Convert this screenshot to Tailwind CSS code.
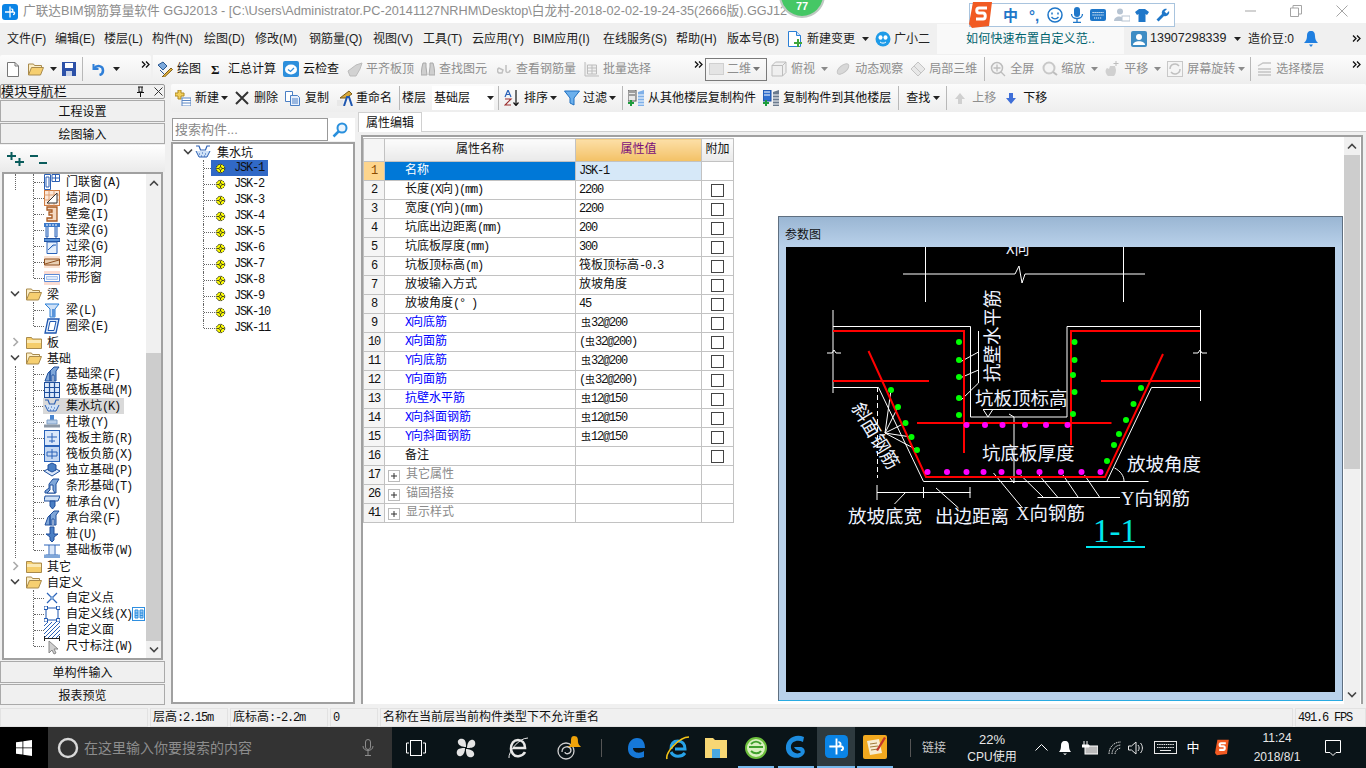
<!DOCTYPE html>
<html lang="zh-CN">
<head>
<meta charset="UTF-8">
<title>广联达BIM钢筋算量软件 GGJ2013</title>
<script src="https://cdn.jsdelivr.net/npm/@tailwindcss/browser@4"></script>
</head>
<body class="relative w-[1366px] h-[768px] overflow-hidden flex flex-col bg-[#f0f0f0] text-[12px] leading-none text-[#111] whitespace-nowrap font-['Liberation_Sans','Noto_Sans_CJK_SC',sans-serif]">

<!-- shared icons -->
<svg class="absolute w-0 h-0">
  <symbol id="caret" viewBox="0 0 7 4"><path d="M0 0h7L3.5 4z" fill="#222"/></symbol>
  <symbol id="more" viewBox="0 0 9 7"><path d="M1 .5l3 3-3 3M5 .5l3 3-3 3" fill="none" stroke="#111" stroke-width="1.3"/></symbol>
  <symbol id="gear" viewBox="0 0 11 11"><circle cx="5.5" cy="5.5" r="4.2" fill="#ffff00" stroke="#222" stroke-width="1" stroke-dasharray="1.6 .8"/><path d="M5.5 2v7M2 5.5h7" stroke="#222" stroke-width=".8"/><circle cx="5.5" cy="5.5" r="1.5" fill="#ffff00" stroke="#222" stroke-width=".7"/></symbol>
  <symbol id="folder" viewBox="0 0 16 14"><path d="M.5 2.5h5l1 1.5h9v9.5H.5z" fill="#f5cd6a" stroke="#a98a4c"/><path d="M1 5h14v3H1z" fill="#fbe9b4"/></symbol>
  <symbol id="folder-open" viewBox="0 0 16 14"><path d="M.5 13V2h5l1 1.500h7V6" fill="#fbeec7" stroke="#a98a4c"/><path d="M.5 13l3-7.500h12l-3 7.500z" fill="#f6cf70" stroke="#a98a4c"/></symbol>
  <symbol id="down" viewBox="0 0 10 8"><path d="M1 1.500l4 4 4-4" fill="none" stroke="#444" stroke-width="1.600"/></symbol>
  <symbol id="right" viewBox="0 0 8 10"><path d="M1.500 1l4 4-4 4" fill="none" stroke="#aaa" stroke-width="1.600"/></symbol>
  <symbol id="pit" viewBox="0 0 16 16"><path d="M1 2h3l1.500 4h5L12 2h3" fill="none" stroke="#2a5fb4" stroke-width="1.200"/><path d="M1 7l3 6h8l3-6" fill="#cfe1f7" stroke="#2a5fb4"/><path d="M4 10h1M7 9h1M10 10h1M6 12h1M9 12h1" stroke="#2a5fb4"/></symbol>
  <symbol id="beam3d" viewBox="0 0 16 16"><path d="M1 15l3-8 2-2v10zM6 5l4-4h5l-3 4v10H6z" fill="#7fa6d8" stroke="#1f4f9c"/><path d="M8 15V9h2v6" fill="#fff" stroke="#1f4f9c"/></symbol>
  <symbol id="rebar" viewBox="0 0 16 16"><rect x=".5" y=".5" width="15" height="15" fill="#dbe8fa" stroke="#2a62b8"/><path d="M3 7h10M8 3v10M5 11h6" stroke="#2a62b8" fill="none"/></symbol>
</svg>

<!-- title bar -->
<header class="h-[23px] shrink-0 bg-white flex items-center">
  <svg class="ml-[2px] w-4 h-4" viewBox="0 0 16 16"><rect width="16" height="16" rx="3" fill="#0a84e6"/><path d="M8 2.500v11M3 8h5.500c3 0 3-3 .8-3M8 8h3.500c1.500 0 1.500 2.500-.5 2.500" fill="none" stroke="#fff" stroke-width="1.300"/></svg>
  <span class="ml-[5px] text-[12.700px] text-[#8d8d8d]">广联达BIM钢筋算量软件 GGJ2013 - [C:\Users\Administrator.PC-20141127NRHM\Desktop\白龙村-2018-02-02-19-24-35(2666版).GGJ12</span>
</header>

<!-- floating score badge and input method bar -->
<div class="absolute left-[779px] top-[-28px] w-[46px] h-[46px] rounded-full bg-[#45c765] border-2 border-[#bfc9c2] z-10 flex items-end justify-center pb-[4px] text-white text-[11px] font-bold">77</div>
<div class="absolute left-[969px] top-[3px] w-[206px] h-[24px] bg-white border border-[#a9c4de] z-10 flex items-center text-[#1f77c9]">
  <svg class="absolute left-[-1px] top-[-3px] w-[25px] h-[28px]" viewBox="0 0 25 28"><path d="M4 1h19l-3 24-17 2-3-4z" fill="#f15a22"/><path d="M18 7h-8c-3 0-3 5 0 5h4c3 0 3 6 0 6H7" fill="none" stroke="#fff" stroke-width="3"/></svg>
  <span class="ml-[33px] w-[26px] text-[15px] font-bold">中</span>
  <span class="w-[18px] text-[15px] font-bold">°,</span>
  <svg class="w-[16px] h-[16px]" viewBox="0 0 16 16"><circle cx="8" cy="8" r="7" fill="none" stroke="#1f77c9" stroke-width="1.500"/><path d="M5 5.500v2M11 5.500v2" stroke="#1f77c9" stroke-width="1.500"/><path d="M4.500 10c2 2.500 5 2.500 7 0" fill="none" stroke="#1f77c9" stroke-width="1.300"/></svg>
  <svg class="ml-[7px] w-[14px] h-[16px]" viewBox="0 0 14 16"><rect x="4" y="0" width="6" height="10" rx="3" fill="#1f77c9"/><path d="M1.500 7c0 6 11 6 11 0M7 12v3M3 15.500h8" fill="none" stroke="#1f77c9" stroke-width="1.300"/></svg>
  <svg class="ml-[6px] w-[16px] h-[12px]" viewBox="0 0 16 12"><rect width="16" height="12" rx="2" fill="#1f77c9"/><path d="M2.500 3.500h11M2.500 6h11M4 9h8" stroke="#fff" stroke-dasharray="1.200 .8"/></svg>
  <svg class="ml-[8px] w-[16px] h-[14px]" viewBox="0 0 16 14"><circle cx="6" cy="3.500" r="3" fill="#b7c4d2"/><path d="M0 13c0-6 10-6 10 0z" fill="#b7c4d2"/><rect x="8" y="8" width="8" height="5" fill="#fff" stroke="#b7c4d2"/></svg>
  <svg class="ml-[5px] w-[14px] h-[13px]" viewBox="0 0 14 13"><path d="M4 0h6l4 3-2 3-1.500-1v8h-7V5L2 6 0 3z" fill="#1f77c9"/></svg>
  <svg class="ml-[7px] w-[14px] h-[14px]" viewBox="0 0 14 14"><path d="M13 3l-2.500 2.500-2-2L11 1C8 0 5 3 6 6L.5 11.500l2 2L8 8c3 1 6-2 5-5z" fill="#1f77c9"/></svg>
</div>
<div class="absolute left-[1245px] top-0 h-[21px] flex items-center text-[#a5a5a5]">
  <svg class="w-[18px] h-[12px]" viewBox="0 0 18 12"><path d="M0 6h11" stroke="#a5a5a5"/></svg>
  <svg class="ml-[27px] w-[12px] h-[12px]" viewBox="0 0 12 12"><path d="M.5 3h8v8.500h-8zM3 3V.5h8.500V9H8.500" fill="none" stroke="#a5a5a5"/></svg>
  <svg class="ml-[34px] w-[12px] h-[12px]" viewBox="0 0 12 12"><path d="M.5.500l11 11M11.500.500l-11 11" stroke="#a5a5a5"/></svg>
</div>

<!-- menu bar -->
<nav class="h-[31px] shrink-0 flex items-center pl-[7px] bg-[#f0f0f0] text-[#222]">
  <span class="w-[48px]">文件(F)</span><span class="w-[49px]">编辑(E)</span><span class="w-[48px]">楼层(L)</span><span class="w-[52px]">构件(N)</span><span class="w-[51px]">绘图(D)</span><span class="w-[54px]">修改(M)</span><span class="w-[64px]">钢筋量(Q)</span><span class="w-[50px]">视图(V)</span><span class="w-[49px]">工具(T)</span><span class="w-[61px]">云应用(Y)</span><span class="w-[70px]">BIM应用(I)</span><span class="w-[73px]">在线服务(S)</span><span class="w-[51px]">帮助(H)</span><span class="w-[61px]">版本号(B)</span>
  <span class="w-[19px]"><svg class="w-[14px] h-[16px]" viewBox="0 0 14 16"><path d="M.5.500h8l4 4v11H.5z" fill="#fff" stroke="#2a7fd6"/><path d="M8.500.500v4h4" fill="#cfe3f8" stroke="#2a7fd6"/><path d="M9 8v3H6v2h3v3h2v-3h3v-2h-3V8z" fill="#3fa63a"/></svg></span>
  <span class="w-[55px]">新建变更</span>
  <span class="w-[13px]"><svg class="w-[7px] h-[4px]"><use href="#caret"/></svg></span>
  <span class="w-[19px]"><svg class="w-[16px] h-[16px]" viewBox="0 0 16 16"><circle cx="8" cy="8" r="7.500" fill="#1e9be8"/><ellipse cx="5.500" cy="6.500" rx="2" ry="2.200" fill="#fff"/><ellipse cx="10.500" cy="6.500" rx="2" ry="2.200" fill="#fff"/><path d="M5 11c2 1.500 4 1.500 6 0" fill="none" stroke="#fff"/></svg></span>
  <span class="w-[43px]">广小二</span>
  <span class="w-[187px] h-full mt-[1px] bg-[#f9f9f9] pl-[29px] flex items-center text-[#00646e] tracking-[.2px]">如何快速布置自定义范..</span>
  <svg class="ml-[7px] w-4 h-4" viewBox="0 0 16 16"><rect width="16" height="16" rx="2" fill="#3d8cc4"/><circle cx="8" cy="6" r="3" fill="#fff"/><path d="M2 14c0-5 12-5 12 0z" fill="#fff"/></svg>
  <span class="ml-[3px] w-[84px] text-[12.500px]">13907298339</span>
  <span class="w-[14px]"><svg class="w-[7px] h-[4px]"><use href="#caret"/></svg></span>
  <span class="w-[56px]">造价豆:0</span>
  <svg class="w-[14px] h-[16px]" viewBox="0 0 14 16"><path d="M7 0c3 0 4 2 4 5 0 3 1 5 3 7H0c2-2 3-4 3-7 0-3 1-5 4-5z" fill="#1f7fe0"/><path d="M5 13.500h4L7 16z" fill="#1f7fe0"/></svg>
  <svg class="ml-[34px] w-[9px] h-[7px]"><use href="#more"/></svg>
</nav>

<!-- main toolbar -->
<div class="h-[30px] shrink-0 flex items-center bg-[#f0f0f0]">
  <div class="w-[151px] h-[29px] rounded-[2px] flex items-center pl-[7px] bg-gradient-to-b from-[#fcfcfc] to-[#eeeeee]">
    <svg class="w-[12px] h-[15px]" viewBox="0 0 12 15"><path d="M.5.500h7.500l3.500 3.500v10.500H.5z" fill="#fff" stroke="#777"/><path d="M8 .500V4h3.500" fill="none" stroke="#777"/></svg>
    <svg class="ml-[9px] w-[16px] h-[14px]"><use href="#folder-open"/></svg>
    <svg class="ml-[6px] w-[7px] h-[4px]"><use href="#caret"/></svg>
    <svg class="ml-[5px] w-[14px] h-[14px]" viewBox="0 0 14 14"><path d="M0 0h14v14H0z" fill="#2c51a8"/><path d="M3 1h8v5H3z" fill="#fff"/><path d="M4 9h6v5H4z" fill="#c9d3e8"/></svg>
    <i class="block ml-[6px] w-px h-[24px] bg-[#b8b8b8]"></i>
    <svg class="ml-[8px] w-[14px] h-[14px]" viewBox="0 0 14 14"><path d="M2.500 2v5h5" fill="none" stroke="#2f7fd8" stroke-width="2"/><path d="M3 6.500c3-4 9-3 9 2 0 2-1.500 4-3.500 4.500" fill="none" stroke="#2f7fd8" stroke-width="2.500"/></svg>
    <svg class="ml-[8px] w-[7px] h-[4px]"><use href="#caret"/></svg>
    <svg class="ml-[21px] -mt-[10px] w-[9px] h-[7px]"><use href="#more"/></svg>
  </div>
  <div class="ml-[2px] w-[1213px] h-[29px] flex items-center pl-[4px] bg-gradient-to-b from-[#fcfcfc] to-[#eeeeee]">
    <svg class="w-4 h-4" viewBox="0 0 16 16"><path d="M1 4l5-3 4 4-4 4z" fill="#7ca9dc" stroke="#29568f"/><path d="M6 15l8-8 1.500 1.500-8 7.500H5z" fill="#e3b23c" stroke="#7b5a15"/><path d="M3 9l4 4" stroke="#29568f"/></svg>
    <span class="ml-[4px]">绘图</span>
    <span class="ml-[10px] w-[7px] font-bold text-[13px] font-['Liberation_Serif']">Σ</span>
    <span class="ml-[10px]">汇总计算</span>
    <svg class="ml-[7px] w-4 h-4" viewBox="0 0 16 16"><rect width="16" height="16" rx="2" fill="#2d8fdc"/><ellipse cx="8" cy="8.500" rx="6" ry="5" fill="#fff"/><path d="M5 8.500l2.500 2L11 7" fill="none" stroke="#2d8fdc" stroke-width="1.300"/></svg>
    <span class="ml-[4px]">云检查</span>
    <svg class="ml-[8px] w-4 h-4" viewBox="0 0 16 16"><path d="M1 10l8-6 6-2-2 6-4 7H3z" fill="#d2d2d2" stroke="#bbb"/></svg>
    <span class="ml-[3px] text-[#8e8e8e]">平齐板顶</span>
    <svg class="ml-[7px] w-[14px] h-[14px]" viewBox="0 0 14 14"><path d="M2 1h3v4l1 8H0l1-8zM9 1h3l1 4 1 8H8l1-8z" fill="#cfcfcf" stroke="#aaa"/></svg>
    <span class="ml-[4px] text-[#8e8e8e]">查找图元</span>
    <svg class="ml-[10px] w-[14px] h-[14px]" viewBox="0 0 14 14"><path d="M2 6c-2 1-2 4 0 5h3l1-3zM9 3v6c0 2 4 2 4-1" fill="none" stroke="#c0c0c0" stroke-width="1.500"/></svg>
    <span class="ml-[5px] text-[#8e8e8e]">查看钢筋量</span>
    <svg class="ml-[8px] w-4 h-4" viewBox="0 0 16 16"><path d="M1 1v14h14M3.500 4h9v9h-9zM3.500 7h9M3.500 10h9M8 4v9" fill="#eee" stroke="#bdbdbd"/></svg>
    <span class="ml-[3px] text-[#8e8e8e]">批量选择</span>
    <svg class="ml-[43px] -mt-[10px] w-[9px] h-[7px]"><use href="#more"/></svg>
    <span class="ml-[2px] w-[62px] h-[23px] border border-[#7a7a7a] flex items-center pl-[3px] text-[#8e8e8e]">
      <i class="block w-[15px] h-[12px] bg-[#e4e4e4] border border-[#d0d0d0]"></i>
      <span class="ml-[3px] w-[26px]">二维</span>
      <svg class="w-[7px] h-[4px] opacity-60"><use href="#caret"/></svg>
    </span>
    <svg class="ml-[4px] w-4 h-4" viewBox="0 0 16 16"><path d="M1 4.500h10.500V15H1zM1 4.500L4.500 1H15v10.500L11.500 15M11.500 4.500L15 1" fill="#efefef" stroke="#bdbdbd"/></svg>
    <span class="ml-[4px] text-[#8e8e8e]">俯视</span>
    <svg class="ml-[6px] w-[7px] h-[4px] opacity-50"><use href="#caret"/></svg>
    <svg class="ml-[7px] w-4 h-4" viewBox="0 0 16 16"><ellipse cx="8" cy="8" rx="7" ry="3.500" transform="rotate(-40 8 8)" fill="#d8d8d8" stroke="#c4c4c4"/></svg>
    <span class="ml-[4px] text-[#8e8e8e]">动态观察</span>
    <svg class="ml-[7px] w-4 h-4" viewBox="0 0 16 16"><path d="M1 8l7-7 7 7-7 7z" fill="#e8e8e8" stroke="#c4c4c4"/><path d="M4 5l7 7M8 1l7 7" stroke="#c4c4c4"/></svg>
    <span class="ml-[3px] text-[#8e8e8e]">局部三维</span>
    <i class="block ml-[7px] w-px h-[24px] bg-[#b8b8b8]"></i>
    <svg class="ml-[5px] w-4 h-4" viewBox="0 0 16 16"><circle cx="7" cy="7" r="5.500" fill="#f4f4f4" stroke="#bdbdbd" stroke-width="1.500"/><path d="M7 3.500v7M3.500 7h7M11 11l4 4" stroke="#bdbdbd" stroke-width="1.300"/></svg>
    <span class="ml-[4px] text-[#8e8e8e]">全屏</span>
    <svg class="ml-[8px] w-4 h-4" viewBox="0 0 16 16"><circle cx="7" cy="7" r="5.500" fill="#f4f4f4" stroke="#c8c8c8" stroke-width="2"/><path d="M11 11l4 3" stroke="#bdbdbd" stroke-width="2"/></svg>
    <span class="ml-[3px] text-[#8e8e8e]">缩放</span>
    <svg class="ml-[6px] w-[7px] h-[4px] opacity-50"><use href="#caret"/></svg>
    <svg class="ml-[6px] w-4 h-4" viewBox="0 0 16 16"><path d="M4 15c-3-3-3-6-1-8l2 1 1-3h5l1 4c0 3-1 5-2 6z" fill="#d0d0d0"/><path d="M12 0v5M9.500 2.500h5" stroke="#bdbdbd"/></svg>
    <span class="ml-[4px] text-[#8e8e8e]">平移</span>
    <svg class="ml-[6px] w-[7px] h-[4px] opacity-50"><use href="#caret"/></svg>
    <svg class="ml-[6px] w-4 h-4" viewBox="0 0 16 16"><rect x=".5" y=".5" width="15" height="15" fill="#f5f5f5" stroke="#c8c8c8"/><path d="M3 8a5 5 0 0 1 9-3M13 8a5 5 0 0 1-9 3" fill="none" stroke="#c0c0c0" stroke-width="1.500"/></svg>
    <span class="ml-[4px] text-[#8e8e8e]">屏幕旋转</span>
    <svg class="ml-[3px] w-[7px] h-[4px] opacity-50"><use href="#caret"/></svg>
    <i class="block ml-[5px] w-px h-[24px] bg-[#b8b8b8]"></i>
    <svg class="ml-[6px] w-4 h-4" viewBox="0 0 16 16"><path d="M1 5l5-3h8M1 8h13M1 11h13M1 14h13" fill="none" stroke="#c4c4c4" stroke-width="1.300"/></svg>
    <span class="ml-[3px] text-[#8e8e8e]">选择楼层</span>
    <svg class="ml-[28px] -mt-[10px] w-[9px] h-[7px]"><use href="#more"/></svg>
  </div>
</div>

<div class="h-[620px] shrink-0 flex">
  <!-- left navigation -->
  <aside class="w-[165px] shrink-0 flex flex-col">
    <div class="h-[15px] shrink-0 border border-[#999] rounded-[2px] flex items-center text-[13px] tracking-[.2px] bg-[#f0f0f0]">
      <span class="w-[135px]">模块导航栏</span>
      <svg class="w-[9px] h-[11px]" viewBox="0 0 9 11"><path d="M2 1h5M3 1v5h3V1M1 6.500h7M4.500 7v4" stroke="#111" fill="none"/></svg>
      <svg class="ml-[9px] w-[9px] h-[9px]" viewBox="0 0 9 9"><path d="M.5.500l8 8M8.500.500l-8 8" stroke="#333"/></svg>
    </div>
    <button class="mt-[1px] h-[22px] shrink-0 pt-[2px] border border-[#aaa] bg-[#f0f0f0]">工程设置</button>
    <button class="mt-[1px] h-[21px] shrink-0 pt-[2px] border border-[#aaa] bg-[#f0f0f0]">绘图输入</button>
    <div class="mt-[1px] h-[27px] shrink-0 flex items-center pl-[7px] bg-gradient-to-b from-[#ffffff] to-[#eaeaea]">
      <svg class="w-[17px] h-[14px]" viewBox="0 0 17 14"><path d="M0 4h9M4.500 0v8M8 10h9M12.500 6v8" stroke="#0a5c5c" stroke-width="2"/></svg>
      <svg class="ml-[6px] w-[17px] h-[12px]" viewBox="0 0 17 12"><path d="M0 3h8M9 10h8" stroke="#0a5c5c" stroke-width="2"/></svg>
    </div>
    <!-- module tree -->
    <div class="ml-[2px] w-[161px] h-[488px] shrink-0 border-2 border-[#a0a0a0] bg-white flex overflow-hidden font-['Liberation_Mono','Noto_Sans_CJK_SC',monospace] [&_em]:not-italic [&_em]:text-[12px] [&_em]:tracking-[-1.2px]">
      <div class="w-[142px] flex flex-col">
        <div class="flex h-4 items-center"><i class="block w-[12px] h-4 border-r border-dotted border-[#666]"></i><i class="block w-[18px] h-4 border-r border-dotted border-[#666]"></i><i class="block w-[10px] border-t border-dotted border-[#666]"></i><svg class="w-4 h-4" viewBox="0 0 16 16"><path d="M.5.500h6v15h-6zM2 3h3v10H2zM8 .500h7.500v7H8zM11.500 .5v7M8 4h7.500" fill="#fff" stroke="#2a5fb4"/></svg><span class="ml-[6px] mt-[2px]">门联窗<em>(A)</em></span></div>
        <div class="flex h-4 items-center"><i class="block w-[12px] h-4"></i><i class="block w-[18px] h-4 border-r border-dotted border-[#666]"></i><i class="block w-[10px] border-t border-dotted border-[#666]"></i><svg class="w-4 h-4" viewBox="0 0 16 16"><rect x=".5" y=".5" width="15" height="15" fill="#fbe8da" stroke="#d07d43"/><path d="M.5 5h15M.5 10h15M5 .5v15M10 .5v15" stroke="#e0a276"/><path d="M3 13L13 3M3 13h10V3" fill="#fff" stroke="#333"/></svg><span class="ml-[6px] mt-[2px]">墙洞<em>(D)</em></span></div>
        <div class="flex h-4 items-center"><i class="block w-[12px] h-4"></i><i class="block w-[18px] h-4 border-r border-dotted border-[#666]"></i><i class="block w-[10px] border-t border-dotted border-[#666]"></i><svg class="w-4 h-4" viewBox="0 0 16 16"><path d="M3 1h10v14H3v-3h5V9H5V6h3V4H3z" fill="#f5d9c2" stroke="#a85a22" stroke-width="1.300"/></svg><span class="ml-[6px] mt-[2px]">壁龛<em>(I)</em></span></div>
        <div class="flex h-4 items-center"><i class="block w-[12px] h-4"></i><i class="block w-[18px] h-4 border-r border-dotted border-[#666]"></i><i class="block w-[10px] border-t border-dotted border-[#666]"></i><svg class="w-4 h-4" viewBox="0 0 16 16"><path d="M0 1h16v4H0z" fill="#3a78c9"/><path d="M2 5v10h2V5M11 5v10h2V5" fill="#cfe1f7" stroke="#2a62b8"/><path d="M3 2v2M6 2v2M9 2v2M12 2v2" stroke="#fff"/></svg><span class="ml-[6px] mt-[2px]">连梁<em>(G)</em></span></div>
        <div class="flex h-4 items-center"><i class="block w-[12px] h-4"></i><i class="block w-[18px] h-4 border-r border-dotted border-[#666]"></i><i class="block w-[10px] border-t border-dotted border-[#666]"></i><svg class="w-4 h-4" viewBox="0 0 16 16"><path d="M0 .5h16v3H0z" fill="#5a94da" stroke="#1f4f9c"/><path d="M3 4h10v11.500H3z" fill="#e6f0fc" stroke="#2a62b8"/><path d="M4 12l5-5h3" fill="#a7c6ec" stroke="#2a62b8"/></svg><span class="ml-[6px] mt-[2px]">过梁<em>(G)</em></span></div>
        <div class="flex h-4 items-center"><i class="block w-[12px] h-4"></i><i class="block w-[18px] h-4 border-r border-dotted border-[#666]"></i><i class="block w-[10px] border-t border-dotted border-[#666]"></i><svg class="w-4 h-4" viewBox="0 0 16 16"><path d="M0 2h16v12H0z" fill="#fbe3d2"/><path d="M.5 5h15v6H.5z" fill="#e9d0b4" stroke="#8f4f1e"/><path d="M1 10l14-4" stroke="#8f4f1e"/></svg><span class="ml-[6px] mt-[2px]">带形洞</span></div>
        <div class="flex h-4 items-center"><i class="block w-[12px] h-4"></i><i class="block w-[18px] h-2 self-start border-r border-dotted border-[#666]"></i><i class="block w-[10px] border-t border-dotted border-[#666]"></i><svg class="w-4 h-4" viewBox="0 0 16 16"><path d="M0 1h16v14H0z" fill="#fbdcd2"/><path d="M.5 4.500h15v7H.5z" fill="#fff" stroke="#5a8ad6"/><path d="M2.500 6.500h11v3h-11z" fill="#dde9fb" stroke="#a9c4ec"/></svg><span class="ml-[6px] mt-[2px]">带形窗</span></div>
        <div class="flex h-4 items-center"><span class="w-[22px] flex justify-end pr-[3px]"><svg class="mr-[3px] w-[10px] h-[8px]"><use href="#down"/></svg></span><svg class="w-4 h-[14px]"><use href="#folder-open"/></svg><span class="ml-[5px] mt-[3px]">梁</span></div>
        <div class="flex h-4 items-center"><i class="block w-[12px] h-4"></i><i class="block w-[18px] h-4 border-r border-dotted border-[#666]"></i><i class="block w-[10px] border-t border-dotted border-[#666]"></i><svg class="w-4 h-4" viewBox="0 0 16 16"><path d="M1 2h14l-4 5v8H6V7z" fill="#cfe1f7" stroke="#2a7fd6"/><path d="M8 7h3v8H8z" fill="#5a94da"/></svg><span class="ml-[6px] mt-[2px]">梁<em>(L)</em></span></div>
        <div class="flex h-4 items-center"><i class="block w-[12px] h-4"></i><i class="block w-[18px] h-2 self-start border-r border-dotted border-[#666]"></i><i class="block w-[10px] border-t border-dotted border-[#666]"></i><svg class="w-4 h-4" viewBox="0 0 16 16"><path d="M4 1h11l-3 14H1z" fill="#e3eefc" stroke="#1f57b0" stroke-width="1.300"/><path d="M6 3.500h6l-2 9H4z" fill="#fff" stroke="#1f57b0"/></svg><span class="ml-[6px] mt-[2px]">圈梁<em>(E)</em></span></div>
        <div class="flex h-4 items-center"><span class="w-[22px] flex justify-end"><svg class="mr-[6px] w-[8px] h-[10px]"><use href="#right"/></svg></span><svg class="w-4 h-[14px]"><use href="#folder"/></svg><span class="ml-[5px] mt-[3px]">板</span></div>
        <div class="flex h-4 items-center"><span class="w-[22px] flex justify-end pr-[3px]"><svg class="mr-[3px] w-[10px] h-[8px]"><use href="#down"/></svg></span><svg class="w-4 h-[14px]"><use href="#folder-open"/></svg><span class="ml-[5px] mt-[3px]">基础</span></div>
        <div class="flex h-4 items-center"><i class="block w-[12px] h-4 border-r border-dotted border-[#666]"></i><i class="block w-[18px] h-4 border-r border-dotted border-[#666]"></i><i class="block w-[10px] border-t border-dotted border-[#666]"></i><svg class="w-4 h-4"><use href="#beam3d"/></svg><span class="ml-[6px] mt-[2px]">基础梁<em>(F)</em></span></div>
        <div class="flex h-4 items-center"><i class="block w-[12px] h-4 border-r border-dotted border-[#666]"></i><i class="block w-[18px] h-4 border-r border-dotted border-[#666]"></i><i class="block w-[10px] border-t border-dotted border-[#666]"></i><svg class="w-4 h-4" viewBox="0 0 16 16"><rect x=".5" y=".5" width="15" height="15" fill="#dbe8fa" stroke="#1f4f9c"/><path d="M.5 5.500h15M.5 10.500h15M5.500.5v15M10.500.5v15" stroke="#1f4f9c" stroke-width="1.200"/></svg><span class="ml-[6px] mt-[2px]">筏板基础<em>(M)</em></span></div>
        <div class="flex h-4 items-center"><i class="block w-[12px] h-4 border-r border-dotted border-[#666]"></i><i class="block w-[18px] h-4 border-r border-dotted border-[#666]"></i><i class="block w-[9px] border-t border-dotted border-[#666]"></i><span class="w-[81px] h-4 pl-px flex items-center bg-[#d9d9d9]"><svg class="w-4 h-4"><use href="#pit"/></svg><span class="ml-[6px] mt-[2px]">集水坑<em>(K)</em></span></span></div>
        <div class="flex h-4 items-center"><i class="block w-[12px] h-4 border-r border-dotted border-[#666]"></i><i class="block w-[18px] h-4 border-r border-dotted border-[#666]"></i><i class="block w-[10px] border-t border-dotted border-[#666]"></i><svg class="w-4 h-4" viewBox="0 0 16 16"><path d="M6 1h4v5H6z" fill="#4a86d0"/><path d="M3 6h10v4H3z" fill="#b9cfe9" stroke="#7f9fc6"/><path d="M0 10.500h16v3H0z" fill="#8c98a6"/></svg><span class="ml-[6px] mt-[2px]">柱墩<em>(Y)</em></span></div>
        <div class="flex h-4 items-center"><i class="block w-[12px] h-4 border-r border-dotted border-[#666]"></i><i class="block w-[18px] h-4 border-r border-dotted border-[#666]"></i><i class="block w-[10px] border-t border-dotted border-[#666]"></i><svg class="w-4 h-4"><use href="#rebar"/></svg><span class="ml-[6px] mt-[2px]">筏板主筋<em>(R)</em></span></div>
        <div class="flex h-4 items-center"><i class="block w-[12px] h-4 border-r border-dotted border-[#666]"></i><i class="block w-[18px] h-4 border-r border-dotted border-[#666]"></i><i class="block w-[10px] border-t border-dotted border-[#666]"></i><svg class="w-4 h-4" viewBox="0 0 16 16"><rect x=".5" y=".5" width="15" height="15" fill="#c6d9f3" stroke="#2a62b8"/><path d="M3 6h10v4H3zM8 3v10" fill="none" stroke="#2a62b8"/></svg><span class="ml-[6px] mt-[2px]">筏板负筋<em>(X)</em></span></div>
        <div class="flex h-4 items-center"><i class="block w-[12px] h-4 border-r border-dotted border-[#666]"></i><i class="block w-[18px] h-4 border-r border-dotted border-[#666]"></i><i class="block w-[10px] border-t border-dotted border-[#666]"></i><svg class="w-4 h-4" viewBox="0 0 16 16"><path d="M0 9l8-4 8 4-8 5z" fill="#dbe8fa" stroke="#1f4f9c"/><path d="M4 3l4-2 4 2v5l-4 2-4-2z" fill="#4a7fc4" stroke="#1f4f9c"/></svg><span class="ml-[6px] mt-[2px]">独立基础<em>(P)</em></span></div>
        <div class="flex h-4 items-center"><i class="block w-[12px] h-4 border-r border-dotted border-[#666]"></i><i class="block w-[18px] h-4 border-r border-dotted border-[#666]"></i><i class="block w-[10px] border-t border-dotted border-[#666]"></i><svg class="w-4 h-4" viewBox="0 0 16 16"><path d="M1 15v-2l4-3V6l4-5h6l-3 5v9z" fill="#7fa6d8" stroke="#1f4f9c"/><path d="M3 15l3-3V7h3v5l2 3z" fill="#fff" stroke="#1f4f9c"/></svg><span class="ml-[6px] mt-[2px]">条形基础<em>(T)</em></span></div>
        <div class="flex h-4 items-center"><i class="block w-[12px] h-4 border-r border-dotted border-[#666]"></i><i class="block w-[18px] h-4 border-r border-dotted border-[#666]"></i><i class="block w-[10px] border-t border-dotted border-[#666]"></i><svg class="w-4 h-4" viewBox="0 0 16 16"><path d="M1 2h15l-2 5H0z" fill="#cfe1f7" stroke="#1f4f9c"/><path d="M6 7h5v5l-2.500 3L6 12z" fill="#4a7fc4" stroke="#1f4f9c"/></svg><span class="ml-[6px] mt-[2px]">桩承台<em>(V)</em></span></div>
        <div class="flex h-4 items-center"><i class="block w-[12px] h-4 border-r border-dotted border-[#666]"></i><i class="block w-[18px] h-4 border-r border-dotted border-[#666]"></i><i class="block w-[10px] border-t border-dotted border-[#666]"></i><svg class="w-4 h-4"><use href="#beam3d"/></svg><span class="ml-[6px] mt-[2px]">承台梁<em>(F)</em></span></div>
        <div class="flex h-4 items-center"><i class="block w-[12px] h-4 border-r border-dotted border-[#666]"></i><i class="block w-[18px] h-4 border-r border-dotted border-[#666]"></i><i class="block w-[10px] border-t border-dotted border-[#666]"></i><svg class="w-4 h-4" viewBox="0 0 16 16"><path d="M6 1h4v7h4l-4 3v3l-2 2-2-2v-3L2 8h4z" fill="#4a7fc4" stroke="#1f4f9c"/></svg><span class="ml-[6px] mt-[2px]">桩<em>(U)</em></span></div>
        <div class="flex h-4 items-center"><i class="block w-[12px] h-4 border-r border-dotted border-[#666]"></i><i class="block w-[18px] h-2 self-start border-r border-dotted border-[#666]"></i><i class="block w-[10px] border-t border-dotted border-[#666]"></i><svg class="w-4 h-4" viewBox="0 0 16 16"><path d="M0 3h16M2 13h12M5 3v10M11 3v10" stroke="#2a62b8" fill="none"/><path d="M0 12.500h16V16H0z" fill="#7fa6d8"/><path d="M6 4h4v8H6z" fill="#dbe8fa"/></svg><span class="ml-[6px] mt-[2px]">基础板带<em>(W)</em></span></div>
        <div class="flex h-4 items-center"><span class="w-[22px] flex justify-end"><svg class="mr-[6px] w-[8px] h-[10px]"><use href="#right"/></svg></span><svg class="w-4 h-[14px]"><use href="#folder"/></svg><span class="ml-[5px] mt-[3px]">其它</span></div>
        <div class="flex h-4 items-center"><span class="w-[22px] flex justify-end pr-[3px]"><svg class="mr-[3px] w-[10px] h-[8px]"><use href="#down"/></svg></span><svg class="w-4 h-[14px]"><use href="#folder-open"/></svg><span class="ml-[5px] mt-[3px]">自定义</span></div>
        <div class="flex h-4 items-center"><i class="block w-[12px] h-4"></i><i class="block w-[18px] h-4 border-r border-dotted border-[#666]"></i><i class="block w-[10px] border-t border-dotted border-[#666]"></i><svg class="w-4 h-4" viewBox="0 0 16 16"><path d="M3 3l10 10M13 3L3 13" stroke="#2a62b8" stroke-width="1.200"/><circle cx="8" cy="8" r="2" fill="#7fa6d8"/></svg><span class="ml-[6px] mt-[2px]">自定义点</span></div>
        <div class="flex h-4 items-center"><i class="block w-[12px] h-4"></i><i class="block w-[18px] h-4 border-r border-dotted border-[#666]"></i><i class="block w-[10px] border-t border-dotted border-[#666]"></i><svg class="w-4 h-4" viewBox="0 0 16 16"><rect x="2" y="2" width="12" height="12" fill="none" stroke="#1f57b0"/><path d="M0 0h3.500v3.500H0zM12.500 0H16v3.500h-3.500zM0 12.500h3.500V16H0zM12.500 12.500H16V16h-3.500z" fill="#fff" stroke="#1f57b0"/></svg><span class="ml-[6px] mt-[2px] w-[66px]">自定义线<em>(X)</em></span><svg class="w-[13px] h-[14px]" viewBox="0 0 13 14"><rect x=".5" y=".5" width="12" height="13" fill="#fff" stroke="#2f8fe0"/><path d="M3 3h3v8H3zM8 3h3v8H8zM3 6h3M8 6h3M3 8.500h3M8 8.500h3" fill="#9cc9f2" stroke="#2f8fe0"/></svg></div>
        <div class="flex h-4 items-center"><i class="block w-[12px] h-4"></i><i class="block w-[18px] h-4 border-r border-dotted border-[#666]"></i><i class="block w-[10px] border-t border-dotted border-[#666]"></i><svg class="w-4 h-4" viewBox="0 0 16 16"><path d="M0 4l4-4M0 8l8-8M0 12L12 0M0 16L16 0M4 16L16 4M8 16l8-8M12 16l4-4" stroke="#2a62b8"/></svg><span class="ml-[6px] mt-[2px]">自定义面</span></div>
        <div class="flex h-4 items-center"><i class="block w-[12px] h-4"></i><i class="block w-[18px] h-2 self-start border-r border-dotted border-[#666]"></i><i class="block w-[10px] border-t border-dotted border-[#666]"></i><svg class="w-4 h-4 overflow-visible" viewBox="0 0 16 16"><path d="M.5-2v5M15.500-2v5M0 .5h16" stroke="#222" fill="none"/><path d="M5 3v12l3-3 2 4 2-1-2-4h4z" fill="#cfcfcf" stroke="#888"/></svg><span class="ml-[6px] mt-[2px]">尺寸标注<em>(W)</em></span></div>
      </div>
      <div class="w-[15px] flex flex-col bg-[#f0f0f0]">
        <div class="h-[18px] flex items-center justify-center"><svg class="w-[10px] h-[8px] rotate-180"><use href="#down"/></svg></div>
        <div class="h-[161px]"></div>
        <div class="h-[288px] bg-[#cdcdcd]"></div>
        <div class="h-[17px] flex items-center justify-center"><svg class="w-[10px] h-[8px]"><use href="#down"/></svg></div>
      </div>
    </div>
    <button class="mt-[1px] h-[22px] shrink-0 pt-[2px] border border-[#aaa] bg-[#f0f0f0]">单构件输入</button>
    <button class="mt-[1px] h-[21px] shrink-0 pt-[2px] border border-[#aaa] bg-[#f0f0f0]">报表预览</button>
  </aside>

  <div class="ml-[6px] w-[1195px] flex flex-col">
    <!-- component toolbar -->
    <div class="h-[28px] shrink-0 flex items-center pl-[4px] rounded-[2px] bg-gradient-to-b from-[#fcfcfc] to-[#eeeeee]">
      <svg class="w-4 h-4" viewBox="0 0 16 16"><path d="M3 0h3v3h3v3H6v3H3V6H0V3h3z" fill="#f2cf5b" stroke="#b08a20"/><rect x="7" y="8" width="9" height="8" fill="#fff" stroke="#5a86c4"/><path d="M7 10.500h9M7 13h9" stroke="#5a86c4"/></svg>
      <span class="ml-[4px]">新建</span>
      <svg class="ml-[2px] w-[7px] h-[4px]"><use href="#caret"/></svg>
      <svg class="ml-[7px] w-[14px] h-[14px]" viewBox="0 0 14 14"><path d="M1 1l12 12M13 1L1 13" stroke="#333" stroke-width="2"/></svg>
      <span class="ml-[5px]">删除</span>
      <svg class="ml-[7px] w-[15px] h-[15px]" viewBox="0 0 15 15"><path d="M.5.500h7v10h-7z" fill="#fff" stroke="#4a7fc4"/><path d="M5.500 4.500h7l2 2v8h-9z" fill="#e8f0fc" stroke="#4a7fc4"/><path d="M7 8h6M7 10h6M7 12h6" stroke="#4a7fc4"/></svg>
      <span class="ml-[5px]">复制</span>
      <svg class="ml-[8px] w-4 h-4" viewBox="0 0 16 16"><path d="M3 8l9-7 3 3-6 4z" fill="#d8a93a" stroke="#7b5a15"/><rect x="0" y="10" width="6" height="6" fill="#e8e8e8"/><path d="M7 16l3-9h2l3 9" fill="none" stroke="#1f57b0" stroke-width="2"/></svg>
      <span class="ml-[3px]">重命名</span>
      <i class="block ml-[7px] w-px h-[24px] bg-[#b8b8b8]"></i>
      <span class="ml-[2px]">楼层</span>
      <span class="ml-[6px] w-[62px] h-[24px] bg-white flex items-center pl-[2px]"><span class="w-[53px]">基础层</span><svg class="w-[7px] h-[4px]"><use href="#caret"/></svg></span>
      <i class="block ml-[4px] w-px h-[24px] bg-[#b8b8b8]"></i>
      <svg class="ml-[5px] w-4 h-4" viewBox="0 0 16 16"><path d="M1 7l3-7 3 7M2.200 4.500h3.600" fill="none" stroke="#2a62b8" stroke-width="1.200"/><path d="M1 9h6l-6 6h6" fill="none" stroke="#9b2d2d" stroke-width="1.200"/><path d="M12 0v15M9.500 12.500L12 15.500l2.500-3" fill="none" stroke="#111" stroke-width="1.200"/></svg>
      <span class="ml-[4px]">排序</span>
      <svg class="ml-[2px] w-[7px] h-[4px]"><use href="#caret"/></svg>
      <svg class="ml-[7px] w-4 h-4" viewBox="0 0 16 16"><path d="M.5 1h15L10 8v7l-4-2V8z" fill="#6cb0ec" stroke="#1f6fc0"/></svg>
      <span class="ml-[3px]">过滤</span>
      <svg class="ml-[2px] w-[7px] h-[4px]"><use href="#caret"/></svg>
      <i class="block ml-[6px] w-px h-[24px] bg-[#b8b8b8]"></i>
      <svg class="ml-[5px] w-4 h-4" viewBox="0 0 16 16"><rect x="0" y="0" width="8" height="11" fill="#e8e8e8" stroke="#555"/><path d="M1 2h6M1 5h6" stroke="#555"/><path d="M2 10h2v2h2v2H4v2H2v-2H0v-2h2z" fill="#1c9c3c"/><path d="M10 2l6-2v16h-6z" fill="#7fb0e8"/><path d="M10 5h6M10 8h6M10 11h6M10 14h6" stroke="#fff"/></svg>
      <span class="ml-[4px]">从其他楼层复制构件</span>
      <svg class="ml-[7px] w-4 h-4" viewBox="0 0 16 16"><rect x="0" y="0" width="8" height="11" fill="#2f6fd0" stroke="#1a4fa0"/><path d="M1 2h6M1 5h6" stroke="#fff"/><path d="M2 10h2v2h2v2H4v2H2v-2H0v-2h2z" fill="#1c9c3c"/><path d="M10 2l6-2v16h-6z" fill="#6b7b8e"/><path d="M10 5h6M10 8h6M10 11h6M10 14h6" stroke="#fff"/></svg>
      <span class="ml-[4px]">复制构件到其他楼层</span>
      <i class="block ml-[7px] w-px h-[24px] bg-[#b8b8b8]"></i>
      <span class="ml-[7px]">查找</span>
      <svg class="ml-[3px] w-[7px] h-[4px]"><use href="#caret"/></svg>
      <i class="block ml-[6px] w-px h-[24px] bg-[#b8b8b8]"></i>
      <svg class="ml-[8px] w-[10px] h-[11px]" viewBox="0 0 10 11"><path d="M5 0l5 6H7v5H3V6H0z" fill="#d0d0d0"/></svg>
      <span class="ml-[7px] text-[#8e8e8e]">上移</span>
      <svg class="ml-[10px] w-[10px] h-[11px]" viewBox="0 0 10 11"><path d="M5 11L0 5h3V0h4v5h3z" fill="#3f6fd8"/></svg>
      <span class="ml-[7px]">下移</span>
    </div>

    <div class="h-[592px] flex">
      <!-- component list -->
      <section class="w-[184px] shrink-0 flex flex-col">
        <div class="mt-[6px] ml-px h-[23px] shrink-0 flex bg-white">
          <span class="w-[156px] border border-[#999] flex items-center pl-[2px] text-[#888] text-[13px]">搜索构件...</span>
          <span class="ml-[4px] flex items-center"><svg class="w-[16px] h-[16px]" viewBox="0 0 16 16"><circle cx="10" cy="6" r="4.500" fill="#eaf4fd" stroke="#2a90dd" stroke-width="2"/><path d="M6.500 9.500L1.500 14.500" stroke="#2a90dd" stroke-width="2.500"/></svg></span>
        </div>
        <div class="mt-[1px] h-[562px] border-2 border-[#a0a0a0] bg-white font-['Liberation_Mono','Noto_Sans_CJK_SC',monospace] [&_em]:not-italic [&_em]:text-[12px] [&_em]:tracking-[-1.2px]">
          <div class="flex h-4 items-center"><span class="w-[22px] flex justify-end"><svg class="mr-[2px] w-[10px] h-[8px]"><use href="#down"/></svg></span><svg class="w-4 h-4"><use href="#pit"/></svg><span class="ml-[6px] mt-[3px]">集水坑</span></div>
          <div class="flex h-4 items-center"><i class="block w-[31px] h-4 border-r border-dotted border-[#666]"></i><i class="block w-[7px] border-t border-dotted border-[#666]"></i><span class="w-[57px] h-4 pl-[4px] flex items-center bg-[#3169c6]"><svg class="w-[11px] h-[11px]"><use href="#gear"/></svg><span class="ml-[8px]"><em>JSK-1</em></span></span></div>
          <div class="flex h-4 items-center"><i class="block w-[31px] h-4 border-r border-dotted border-[#666]"></i><i class="block w-[11px] border-t border-dotted border-[#666]"></i><svg class="w-[11px] h-[11px]"><use href="#gear"/></svg><span class="ml-[8px]"><em>JSK-2</em></span></div>
          <div class="flex h-4 items-center"><i class="block w-[31px] h-4 border-r border-dotted border-[#666]"></i><i class="block w-[11px] border-t border-dotted border-[#666]"></i><svg class="w-[11px] h-[11px]"><use href="#gear"/></svg><span class="ml-[8px]"><em>JSK-3</em></span></div>
          <div class="flex h-4 items-center"><i class="block w-[31px] h-4 border-r border-dotted border-[#666]"></i><i class="block w-[11px] border-t border-dotted border-[#666]"></i><svg class="w-[11px] h-[11px]"><use href="#gear"/></svg><span class="ml-[8px]"><em>JSK-4</em></span></div>
          <div class="flex h-4 items-center"><i class="block w-[31px] h-4 border-r border-dotted border-[#666]"></i><i class="block w-[11px] border-t border-dotted border-[#666]"></i><svg class="w-[11px] h-[11px]"><use href="#gear"/></svg><span class="ml-[8px]"><em>JSK-5</em></span></div>
          <div class="flex h-4 items-center"><i class="block w-[31px] h-4 border-r border-dotted border-[#666]"></i><i class="block w-[11px] border-t border-dotted border-[#666]"></i><svg class="w-[11px] h-[11px]"><use href="#gear"/></svg><span class="ml-[8px]"><em>JSK-6</em></span></div>
          <div class="flex h-4 items-center"><i class="block w-[31px] h-4 border-r border-dotted border-[#666]"></i><i class="block w-[11px] border-t border-dotted border-[#666]"></i><svg class="w-[11px] h-[11px]"><use href="#gear"/></svg><span class="ml-[8px]"><em>JSK-7</em></span></div>
          <div class="flex h-4 items-center"><i class="block w-[31px] h-4 border-r border-dotted border-[#666]"></i><i class="block w-[11px] border-t border-dotted border-[#666]"></i><svg class="w-[11px] h-[11px]"><use href="#gear"/></svg><span class="ml-[8px]"><em>JSK-8</em></span></div>
          <div class="flex h-4 items-center"><i class="block w-[31px] h-4 border-r border-dotted border-[#666]"></i><i class="block w-[11px] border-t border-dotted border-[#666]"></i><svg class="w-[11px] h-[11px]"><use href="#gear"/></svg><span class="ml-[8px]"><em>JSK-9</em></span></div>
          <div class="flex h-4 items-center"><i class="block w-[31px] h-4 border-r border-dotted border-[#666]"></i><i class="block w-[11px] border-t border-dotted border-[#666]"></i><svg class="w-[11px] h-[11px]"><use href="#gear"/></svg><span class="ml-[8px]"><em>JSK-10</em></span></div>
          <div class="flex h-4 items-center"><i class="block w-[31px] h-2 self-start border-r border-dotted border-[#666]"></i><i class="block w-[11px] border-t border-dotted border-[#666]"></i><svg class="w-[11px] h-[11px]"><use href="#gear"/></svg><span class="ml-[8px]"><em>JSK-11</em></span></div>
        </div>
      </section>

      <!-- property editor -->
      <section class="ml-[3px] w-[1008px] flex flex-col">
        <div class="h-[20px] shrink-0 flex bg-white">
          <span class="w-[64px] border border-b-0 border-[#d0d0d0] flex items-center justify-center">属性编辑</span>
          <span class="flex-1 border-b border-[#d0d0d0]"></span>
        </div>
        <div class="ml-[3px] mt-[3px] w-[1002px] h-[569px] flex bg-white border-l-2 border-t-2 border-r-2 border-[#a0a0a0]">
          <table class="mt-[1px] self-start w-[370px] table-fixed border-collapse font-['Liberation_Mono','Noto_Sans_CJK_SC',monospace] [&_em]:not-italic [&_em]:text-[12px] [&_em]:tracking-[-1.2px] [&_td]:border [&_td]:border-[#c2c2c2] [&_td]:pt-px [&_td]:h-[19px] [&_td]:leading-[17px] [&_th]:border [&_th]:border-[#c2c2c2] [&_th]:font-normal">
            <colgroup><col class="w-[21px]"><col class="w-[191px]"><col class="w-[126px]"><col class="w-[32px]"></colgroup>
            <tr class="h-[23px]"><th class="bg-[#f5f5f5]"></th><th class="bg-gradient-to-b from-[#fcfcfc] to-[#e9e9e9]">属性名称</th><th class="bg-gradient-to-b from-[#fcdfa6] to-[#f3c164] text-[#7a0f7a]">属性值</th><th class="bg-gradient-to-b from-[#fcfcfc] to-[#e9e9e9]">附加</th></tr>
            <tr><td class="bg-[#fdd58d] text-center text-[#8a4b00]"><em>1</em></td><td class="bg-[#0078d7] text-white pl-[20px]">名称</td><td class="bg-[#d6e8f8] pl-[3px]"><em>JSK-1</em></td><td></td></tr>
            <tr><td class="bg-[#f5f5f5] text-center"><em>2</em></td><td class="pl-[20px]">长度<em>(X</em>向<em>)(mm)</em></td><td class="pl-[3px]"><em>2200</em></td><td><i class="block mx-auto w-[13px] h-[13px] border border-[#444]"></i></td></tr>
            <tr><td class="bg-[#f5f5f5] text-center"><em>3</em></td><td class="pl-[20px]">宽度<em>(Y</em>向<em>)(mm)</em></td><td class="pl-[3px]"><em>2200</em></td><td><i class="block mx-auto w-[13px] h-[13px] border border-[#444]"></i></td></tr>
            <tr><td class="bg-[#f5f5f5] text-center"><em>4</em></td><td class="pl-[20px]">坑底出边距离<em>(mm)</em></td><td class="pl-[3px]"><em>200</em></td><td><i class="block mx-auto w-[13px] h-[13px] border border-[#444]"></i></td></tr>
            <tr><td class="bg-[#f5f5f5] text-center"><em>5</em></td><td class="pl-[20px]">坑底板厚度<em>(mm)</em></td><td class="pl-[3px]"><em>300</em></td><td><i class="block mx-auto w-[13px] h-[13px] border border-[#444]"></i></td></tr>
            <tr><td class="bg-[#f5f5f5] text-center"><em>6</em></td><td class="pl-[20px]">坑板顶标高<em>(m)</em></td><td class="pl-[3px]">筏板顶标高<em>-0.3</em></td><td><i class="block mx-auto w-[13px] h-[13px] border border-[#444]"></i></td></tr>
            <tr><td class="bg-[#f5f5f5] text-center"><em>7</em></td><td class="pl-[20px]">放坡输入方式</td><td class="pl-[3px]">放坡角度</td><td><i class="block mx-auto w-[13px] h-[13px] border border-[#444]"></i></td></tr>
            <tr><td class="bg-[#f5f5f5] text-center"><em>8</em></td><td class="pl-[20px]">放坡角度<em>(° )</em></td><td class="pl-[3px]"><em>45</em></td><td><i class="block mx-auto w-[13px] h-[13px] border border-[#444]"></i></td></tr>
            <tr><td class="bg-[#f5f5f5] text-center"><em>9</em></td><td class="pl-[20px] text-[#0000ff]"><em>X</em>向底筋</td><td class="pl-[5px]"><span class="text-[10px]">虫</span><em>32@200</em></td><td><i class="block mx-auto w-[13px] h-[13px] border border-[#444]"></i></td></tr>
            <tr><td class="bg-[#f5f5f5] text-center"><em>10</em></td><td class="pl-[20px] text-[#0000ff]"><em>X</em>向面筋</td><td class="pl-[3px]"><em>(</em><span class="text-[10px]">虫</span><em>32@200)</em></td><td><i class="block mx-auto w-[13px] h-[13px] border border-[#444]"></i></td></tr>
            <tr><td class="bg-[#f5f5f5] text-center"><em>11</em></td><td class="pl-[20px] text-[#0000ff]"><em>Y</em>向底筋</td><td class="pl-[5px]"><span class="text-[10px]">虫</span><em>32@200</em></td><td><i class="block mx-auto w-[13px] h-[13px] border border-[#444]"></i></td></tr>
            <tr><td class="bg-[#f5f5f5] text-center"><em>12</em></td><td class="pl-[20px] text-[#0000ff]"><em>Y</em>向面筋</td><td class="pl-[3px]"><em>(</em><span class="text-[10px]">虫</span><em>32@200)</em></td><td><i class="block mx-auto w-[13px] h-[13px] border border-[#444]"></i></td></tr>
            <tr><td class="bg-[#f5f5f5] text-center"><em>13</em></td><td class="pl-[20px] text-[#0000ff]">抗壁水平筋</td><td class="pl-[5px]"><span class="text-[10px]">虫</span><em>12@150</em></td><td><i class="block mx-auto w-[13px] h-[13px] border border-[#444]"></i></td></tr>
            <tr><td class="bg-[#f5f5f5] text-center"><em>14</em></td><td class="pl-[20px] text-[#0000ff]"><em>X</em>向斜面钢筋</td><td class="pl-[5px]"><span class="text-[10px]">虫</span><em>12@150</em></td><td><i class="block mx-auto w-[13px] h-[13px] border border-[#444]"></i></td></tr>
            <tr><td class="bg-[#f5f5f5] text-center"><em>15</em></td><td class="pl-[20px] text-[#0000ff]"><em>Y</em>向斜面钢筋</td><td class="pl-[5px]"><span class="text-[10px]">虫</span><em>12@150</em></td><td><i class="block mx-auto w-[13px] h-[13px] border border-[#444]"></i></td></tr>
            <tr><td class="bg-[#f5f5f5] text-center"><em>16</em></td><td class="pl-[20px]">备注</td><td></td><td><i class="block mx-auto w-[13px] h-[13px] border border-[#444]"></i></td></tr>
            <tr><td class="bg-[#f5f5f5] text-center"><em>17</em></td><td class="text-[#8a8a8a]"><span class="flex items-center pl-[3px]"><svg class="w-[12px] h-[12px]" viewBox="0 0 12 12"><rect x=".5" y=".5" width="11" height="11" fill="#fff" stroke="#bbb"/><path d="M3 6h6M6 3v6" stroke="#333"/></svg><span class="ml-[6px]">其它属性</span></span></td><td></td><td></td></tr>
            <tr><td class="bg-[#f5f5f5] text-center"><em>26</em></td><td class="text-[#8a8a8a]"><span class="flex items-center pl-[3px]"><svg class="w-[12px] h-[12px]" viewBox="0 0 12 12"><rect x=".5" y=".5" width="11" height="11" fill="#fff" stroke="#bbb"/><path d="M3 6h6M6 3v6" stroke="#333"/></svg><span class="ml-[6px]">锚固搭接</span></span></td><td></td><td></td></tr>
            <tr><td class="bg-[#f5f5f5] text-center"><em>41</em></td><td class="text-[#8a8a8a]"><span class="flex items-center pl-[3px]"><svg class="w-[12px] h-[12px]" viewBox="0 0 12 12"><rect x=".5" y=".5" width="11" height="11" fill="#fff" stroke="#bbb"/><path d="M3 6h6M6 3v6" stroke="#333"/></svg><span class="ml-[6px]">显示样式</span></span></td><td></td><td></td></tr>
          </table>

          <!-- parameter drawing window -->
          <div class="ml-[44px] mt-[79px] w-[565px] h-[485px] shrink-0 flex flex-col bg-[#b9d1ea] border border-[#5f6f80] border-b-[#29abe2]">
            <div class="h-[30px] shrink-0 flex items-center pl-[6px] pt-[5px] bg-gradient-to-b from-[#9ab6d3] to-[#b9d1ea]">参数图</div>
            <svg class="ml-[7px] w-[549px] h-[445px] bg-black font-['Noto_Sans_CJK_SC']" viewBox="786 247 549 445" fill="none">
              <g stroke="#fff">
                <path d="M925.500 247v55M1123.500 247v55M903 274h112l4-8 3 17 3-9h120"/>
                <path d="M833 310v83M1200.500 310v91M827 353h5l2-3 2 3h5M1193 353h5l2-3 2 3h5"/>
                <path d="M833 326.500h137.500v90.500h96.500v-90.500h133.500"/>
                <path d="M833 387.500h45.500L923.500 481.500H1148.500M1200 387.500h-48.500L1107 481"/>
                <path d="M877.500 387v91" stroke-dasharray="5 3"/>
                <path d="M978.500 331v52M978.500 352L960 362M978.500 370L960 378M978.500 383L961 400"/>
                <path d="M983 409.500h77M983.500 410l4.500 7 4.500-7M1009 414l5 3v66M1014 483l-4-5"/>
                <path d="M885 433l6-43M885 433l13-26M885 433l20-10M885 433l26 4M885 433l32 17"/>
                <path d="M1114.500 468c6 3 9.500 8 9.500 13"/>
                <path d="M1037.500 497.500H1120M1020.500 475l22.500 22M1039 475l18.500 22M1063 475l15 22M1084.500 475l15 22M993.500 473l29 35"/>
                <path d="M877 492.500h93.500M877 485v15M923.500 487v11M970 487v11M906 492l-11.500 12M936 488l22.500 20"/>
              </g>
              <g stroke="#ff0000" stroke-width="2">
                <path d="M833 331h131v122M1200 331h-129v114M833 381h96M1101 381h99M917 423h194.500"/>
                <path d="M868.500 351l57.500 126h179l58-123"/>
              </g>
              <g fill="#00ff00">
                <circle cx="959" cy="342" r="3"/><circle cx="959" cy="360" r="3"/><circle cx="959" cy="377" r="3"/><circle cx="959" cy="398" r="3"/><circle cx="959" cy="415" r="3"/>
                <circle cx="1074.500" cy="342" r="3"/><circle cx="1074.500" cy="360" r="3"/><circle cx="1073" cy="375" r="3"/><circle cx="1074.500" cy="392" r="3"/><circle cx="1073" cy="414" r="3"/>
                <circle cx="891" cy="390" r="3"/><circle cx="898" cy="407" r="3"/><circle cx="905.500" cy="423" r="3"/><circle cx="911.500" cy="437" r="3"/><circle cx="917" cy="450" r="3"/>
                <circle cx="1141" cy="388" r="3"/><circle cx="1133.500" cy="404" r="3"/><circle cx="1126" cy="420" r="3"/><circle cx="1119" cy="434" r="3"/><circle cx="1114" cy="445" r="3"/><circle cx="1107" cy="461" r="3"/>
              </g>
              <g fill="#ff00ff">
                <circle cx="966.500" cy="425" r="3"/><circle cx="985" cy="425" r="3"/><circle cx="1002.500" cy="425" r="3"/><circle cx="1025" cy="425" r="3"/><circle cx="1046" cy="425" r="3"/><circle cx="1067.500" cy="425" r="3"/>
                <circle cx="927.500" cy="472" r="3"/><circle cx="947" cy="472" r="3"/><circle cx="966.500" cy="472" r="3"/><circle cx="983.500" cy="472" r="3"/><circle cx="1001.500" cy="472" r="3"/><circle cx="1019" cy="472" r="3"/><circle cx="1039.500" cy="472" r="3"/><circle cx="1061" cy="472" r="3"/><circle cx="1081.500" cy="472" r="3"/><circle cx="1100.500" cy="472" r="3"/>
              </g>
              <g fill="#eef3ff" font-size="18.500">
                <text x="1006" y="254" font-size="15">X向</text>
                <text transform="translate(999 382) rotate(-90)">抗壁水平筋</text>
                <text x="975" y="405">坑板顶标高</text>
                <text transform="translate(851 407.500) rotate(59)">斜面钢筋</text>
                <text x="982" y="460">坑底板厚度</text>
                <text x="1127" y="471">放坡角度</text>
                <text x="1121" y="505"><tspan font-family="Liberation Serif">Y</tspan>向钢筋</text>
                <text x="1016" y="520"><tspan font-family="Liberation Serif">X</tspan>向钢筋</text>
                <text x="848" y="523">放坡底宽</text>
                <text x="935" y="523">出边距离</text>
              </g>
              <text x="1093" y="542" fill="#00e6ee" font-size="33" font-family="Liberation Serif">1-1</text>
              <path d="M1086 547h59" stroke="#00e6ee" stroke-width="2"/>
            </svg>
          </div>

          <!-- vertical scrollbar -->
          <div class="ml-px w-[16px] flex flex-col bg-[#f0f0f0]">
            <div class="h-[18px] flex items-center justify-center"><svg class="w-[10px] h-[8px] rotate-180"><use href="#down"/></svg></div>
            <div class="h-[314px] bg-[#cdcdcd]"></div>
            <div class="flex-1"></div>
            <div class="h-[18px] flex items-center justify-center"><svg class="w-[10px] h-[8px]"><use href="#down"/></svg></div>
          </div>
        </div>
      </section>
    </div>
  </div>
</div>

<!-- status bar -->
<footer class="mt-[4px] h-[19px] shrink-0 flex items-center gap-[2px] font-['Liberation_Mono','Noto_Sans_CJK_SC',monospace] [&_em]:not-italic [&_em]:text-[12px] [&_em]:tracking-[-1.2px] [&>span]:h-full [&>span]:flex [&>span]:items-center [&>span]:border [&>span]:border-[#e2e2e2] [&>span]:pl-[2px]">
  <span class="w-[148px]"></span>
  <span class="w-[78px]">层高<em>:2.15m</em></span>
  <span class="w-[98px]">底标高<em>:-2.2m</em></span>
  <span class="w-[48px]"><em>0</em></span>
  <span class="w-[913px]">名称在当前层当前构件类型下不允许重名</span>
  <span class="w-[71px]"><em>491.6 FPS</em></span>
</footer>

<!-- windows taskbar -->
<div class="h-[41px] shrink-0 flex items-center bg-[#0a1418] text-white font-['Liberation_Sans','Noto_Sans_CJK_SC',sans-serif]">
  <span class="w-[48px] h-full flex items-center justify-center bg-black"><svg class="w-[16px] h-[16px]" viewBox="0 0 16 16"><path d="M0 2.300l6.500-.9v6.100H0zM7.300 1.300L16 0v7.500H7.300zM0 8.300h6.500v6.200L0 13.700zM7.300 8.300H16V16l-8.700-1.200z" fill="#fff"/></svg></span>
  <div class="w-[344px] h-full flex items-center bg-[#333]">
    <svg class="ml-[9px] w-[22px] h-[22px]" viewBox="0 0 22 22"><circle cx="11" cy="11" r="9" fill="none" stroke="#d8d8d8" stroke-width="2.400"/></svg>
    <span class="ml-[5px] w-[278px] text-[14px] text-[#8d8d8d]">在这里输入你要搜索的内容</span>
    <svg class="w-[12px] h-[17px]" viewBox="0 0 12 17"><rect x="3.500" y=".5" width="5" height="10" rx="2.500" fill="none" stroke="#8d8d8d"/><path d="M1 7c0 6 10 6 10 0M6 12v4M3 16.500h6" fill="none" stroke="#8d8d8d"/></svg>
  </div>
  <span class="w-[48px] flex justify-center"><svg class="w-[20px] h-[16px]" viewBox="0 0 20 16"><rect x="4.500" y=".5" width="11" height="15" fill="none" stroke="#fff"/><path d="M3 3H.5v10H3M17 3h2.500v10H17" fill="none" stroke="#fff"/></svg></span>
  <span class="w-[52px] flex justify-center"><svg class="w-[22px] h-[22px]" viewBox="0 0 22 22"><g fill="#e4e4e4"><path d="M11 10C8 10 4 9 3 6c-1-3 2-5 5-4 3 1 3 5 3 8z"/><path d="M12 11c0-3 1-7 4-8 3-1 5 2 4 5-1 3-5 3-8 3z"/><path d="M11 12c3 0 7 1 8 4 1 3-2 5-5 4-3-1-3-5-3-8z"/><path d="M10 11c0 3-1 7-4 8-3 1-5-2-4-5 1-3 5-3 8-3z"/></g></svg></span>
  <span class="w-[52px] flex justify-center"><svg class="w-[22px] h-[24px]" viewBox="0 0 22 24"><path d="M4 13c0-6 3-9 7-9s7 3 7 8H6M18 16c-2 4-9 6-12 2-1-2-2-3-2-5" fill="none" stroke="#e8e8e8" stroke-width="2.600"/><path d="M2 22c-1-5 9-20 19-20" fill="none" stroke="#e8e8e8"/></svg></span>
  <span class="w-[52px] flex justify-center"><svg class="w-[30px] h-[28px]" viewBox="0 0 30 28"><circle cx="11" cy="17" r="8" fill="none" stroke="#cfcfcf" stroke-width="1.300"/><path d="M7 18c0-6 8-7 9-2 0 4-6 5-6 2" fill="none" stroke="#cfcfcf" stroke-width="1.300"/><path d="M19 2c4 0 4 3 4 6 0 2 2 4 3 5H13c2-1 3-3 3-5 0-3 0-6 3-6z" fill="#f0a30a"/></svg></span>
  <i class="block ml-[5px] w-px h-[18px] bg-[#555]"></i>
  <span class="ml-[16px] w-[36px] h-full flex items-center justify-center"><svg class="w-[22px] h-[24px]" viewBox="0 0 22 24"><path d="M3 13C3 6 7 2 12 2c6 0 8 5 8 10H8c0 5 7 6 11 3v6c-7 3-16 0-16-8z" fill="#1678d8"/></svg></span>
  <span class="ml-[6px] w-[36px] h-full flex items-center justify-center"><svg class="w-[26px] h-[26px]" viewBox="0 0 26 26"><path d="M6 14c0-6 3-8 7-8s7 3 7 8H10M20 18c-3 4-11 5-14-1" fill="none" stroke="#27a3e8" stroke-width="3"/><path d="M2 24C0 18 14 2 24 2" fill="none" stroke="#f5c518" stroke-width="1.600"/></svg></span>
  <span class="ml-[2px] w-[36px] h-full flex items-center justify-center"><svg class="w-[22px] h-[20px]" viewBox="0 0 22 20"><path d="M0 0h8l2 2h12v18H0z" fill="#f7d774"/><path d="M7 11h8v9H7z" fill="#4aa8e0"/></svg></span>
  <span class="ml-[4px] w-[36px] h-full flex items-center justify-center border-b-2 border-[#76b9ed]"><svg class="w-[22px] h-[24px]" viewBox="0 0 22 24"><circle cx="11" cy="13" r="10" fill="#d9f0c0" stroke="#6cbf3c" stroke-width="2"/><path d="M4 12h14M6 16c3 3 8 3 10 0" fill="none" stroke="#3fa02c" stroke-width="2"/><path d="M6 9c3-3 7-3 10 0" fill="none" stroke="#3fa02c" stroke-width="2"/></svg></span>
  <span class="ml-[4px] w-[36px] h-full flex items-center justify-center border-b-2 border-[#76b9ed]"><svg class="w-[24px] h-[26px]" viewBox="0 0 24 26"><path d="M20 3C10-1 1 6 2 15c1 9 13 12 18 5 2-3 0-7-4-7H10c2 4 6 3 7 5-3 3-9 1-10-4C6 8 13 5 19 8z" fill="#1d8de0"/></svg></span>
  <span class="ml-[3px] w-[38px] h-full flex items-center justify-center bg-[#2e3a3f] border-b-2 border-[#76b9ed]"><svg class="w-[23px] h-[23px]" viewBox="0 0 16 16"><rect width="16" height="16" rx="3" fill="#0a84e6"/><path d="M8 2.500v11M3 8h5.500c3 0 3-3 .8-3M8 8h3.500c1.500 0 1.500 2.500-.5 2.500" fill="none" stroke="#fff" stroke-width="1.300"/></svg></span>
  <span class="ml-[2px] w-[36px] h-full flex items-center justify-center border-b-2 border-[#76b9ed]"><svg class="w-[24px] h-[24px]" viewBox="0 0 24 24"><rect width="24" height="24" rx="2" fill="#f2a91f"/><path d="M4 6l12-2 3 14-12 2z" fill="#f7ecd2"/><path d="M7 9l7-1M7 12l8-1M8 15l7-1" stroke="#a07a3a"/><path d="M13 15L21 2l2 1-8 13z" fill="#c2372a"/></svg></span>
  <i class="block ml-[17px] w-px h-[18px] bg-[#555]"></i>
  <span class="ml-[11px] w-[25px] text-[#c8c8c8]">链接</span>
  <span class="ml-[15px] w-[60px] h-full flex flex-col items-center justify-center gap-[5px] text-[#e8e8e8]"><span class="text-[13px]">22%</span><span>CPU使用</span></span>
  <span class="ml-[9px] w-[20px] flex justify-center"><svg class="w-[13px] h-[7px]" viewBox="0 0 13 7"><path d="M.5 6.500l6-6 6 6" fill="none" stroke="#fff"/></svg></span>
  <span class="ml-[4px] w-[20px] flex justify-center"><svg class="w-[12px] h-[14px]" viewBox="0 0 12 14"><path d="M6 0c3 0 4 2 4 5 0 3 1 5 2 6H0c1-1 2-3 2-6 0-3 1-5 4-5zM4 12.500h4L6 14z" fill="#fff"/></svg></span>
  <span class="ml-[5px] w-[20px] flex justify-center"><svg class="w-[16px] h-[14px]" viewBox="0 0 16 14"><rect x="3" y="5" width="13" height="8" fill="#bbb" stroke="#fff"/><path d="M2 0v4M5 0v4M0 4h7v2H0z" stroke="#fff" fill="#fff"/></svg></span>
  <span class="ml-[5px] w-[20px] flex justify-center"><svg class="w-[14px] h-[13px]" viewBox="0 0 14 13"><path d="M1 13c0-7 5-12 12-12M4 13c0-5 4-9 9-9M7 13c0-3 3-6 6-6" fill="none" stroke="#ddd" stroke-dasharray="1.500 .8"/></svg></span>
  <span class="ml-[1px] w-[20px] flex justify-center"><svg class="w-[16px] h-[14px]" viewBox="0 0 16 14"><path d="M.5 5h3L8 1v12L3.500 9h-3zM10 4c1.500 2 1.500 4 0 6M12.500 2c2.500 3 2.500 7 0 10" fill="none" stroke="#e8e8e8"/></svg></span>
  <span class="ml-[5px] w-[28px] flex justify-center"><svg class="w-[23px] h-[13px]" viewBox="0 0 23 13"><rect x=".5" y=".5" width="22" height="12" fill="none" stroke="#e8e8e8"/><path d="M3 3.500h17M3 6.500h17" stroke="#e8e8e8" stroke-dasharray="1.500 .7"/><path d="M6 9.500h11" stroke="#e8e8e8"/></svg></span>
  <span class="ml-[4px] w-[20px] text-center text-[13px]">中</span>
  <span class="ml-[9px] w-[20px] flex justify-center"><svg class="w-[15px] h-[17px]" viewBox="0 0 25 28"><path d="M4 1h19l-3 24-17 2-3-4z" fill="#f15a22"/><path d="M18 7h-8c-3 0-3 5 0 5h4c3 0 3 6 0 6H7" fill="none" stroke="#fff" stroke-width="3.500"/></svg></span>
  <span class="ml-[10px] w-[70px] h-full flex flex-col items-center justify-center gap-[7px] text-[#e8e8e8]"><span>11:24</span><span>2018/8/1</span></span>
  <span class="ml-[11px] w-[20px] flex justify-center"><svg class="w-[16px] h-[16px]" viewBox="0 0 16 16"><path d="M.5.500h15v12H11l-3 3-3-3H.5z" fill="none" stroke="#fff"/></svg></span>
</div>
</body>
</html>
